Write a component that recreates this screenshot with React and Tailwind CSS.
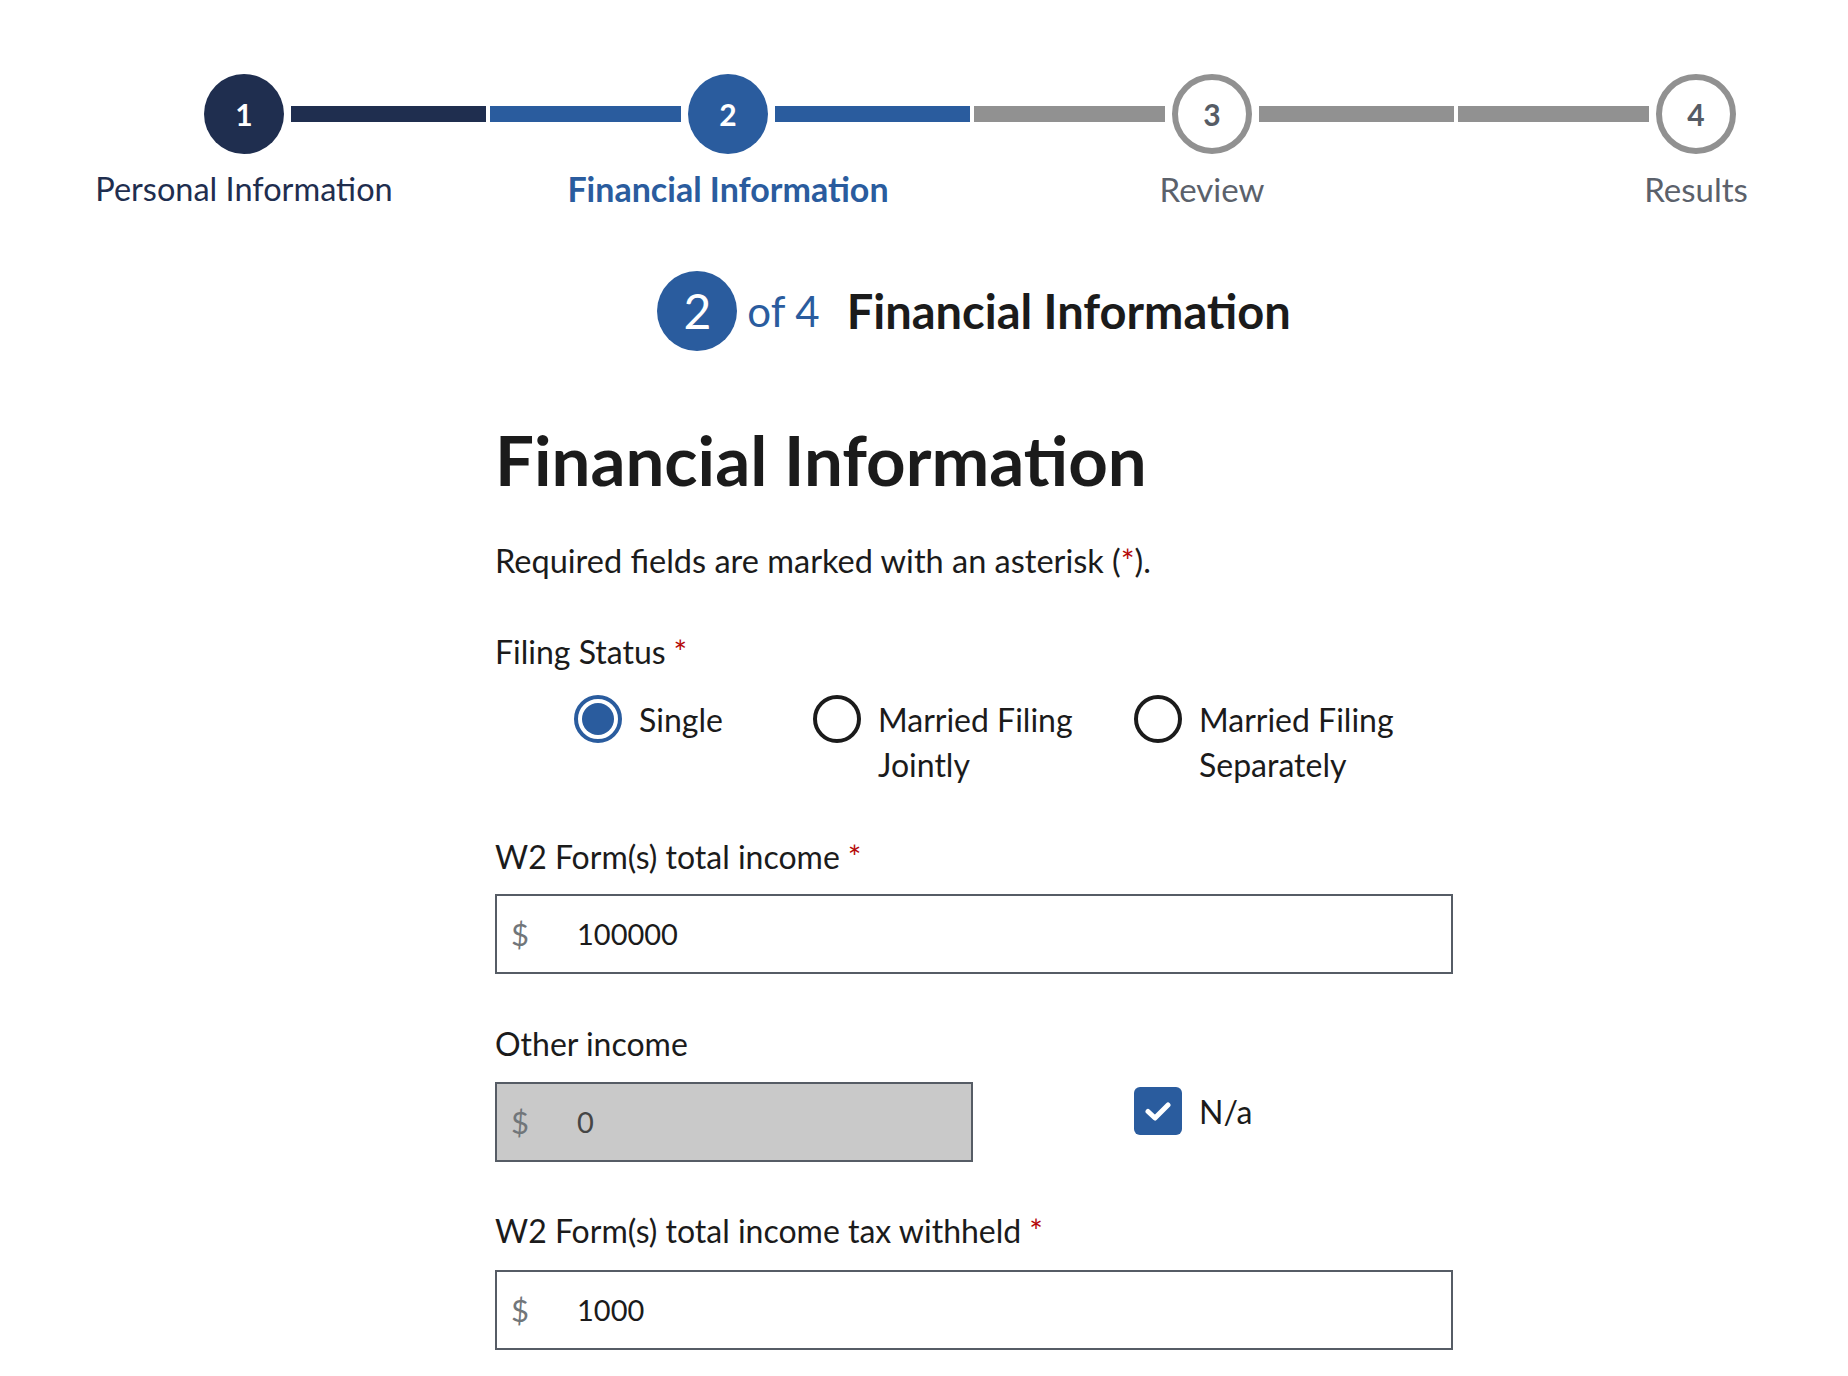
import React from "react";

const NAVY = "#1f2e4f";

function Half({ show, color, side }) {
  return (
    <div className="flex-1">
      {show ? (
        <div
          className={"h-[16px] " + (side === "left" ? "ml-[4px] mr-[7px]" : "ml-[7px] mr-0")}
          style={{ backgroundColor: color }}
        />
      ) : (
        <div className="h-[16px]" />
      )}
    </div>
  );
}

function Step({ n, label, leftColor, rightColor, variant }) {
  let circle;
  if (variant === "done") {
    circle = (
      <div className="w-[80px] h-[80px] rounded-full bg-[#1f2e4f] text-white flex items-center justify-center text-[30px] font-bold shrink-0">
        {n}
      </div>
    );
  } else if (variant === "current") {
    circle = (
      <div className="w-[80px] h-[80px] rounded-full bg-[#2a5c9e] text-white flex items-center justify-center text-[30px] font-bold shrink-0">
        {n}
      </div>
    );
  } else {
    circle = (
      <div className="w-[80px] h-[80px] rounded-full bg-white border-[6px] border-[#919191] text-[#565c65] flex items-center justify-center text-[30px] font-bold shrink-0">
        {n}
      </div>
    );
  }
  const labelCls =
    variant === "done"
      ? "text-[#1f2e4f] text-[32.5px]"
      : variant === "current"
      ? "text-[#2a5c9e] font-bold text-[34px]"
      : "text-[#5b616b] text-[33px]";
  return (
    <div className="w-[484px] shrink-0 flex flex-col items-center">
      <div className="flex items-center w-full">
        <Half side="left" show={!!leftColor} color={leftColor} />
        {circle}
        <Half side="right" show={!!rightColor} color={rightColor} />
      </div>
      <div className={"mt-[15px] leading-[40px] whitespace-nowrap " + labelCls}>{label}</div>
    </div>
  );
}

function Req() {
  return <span className="text-[#b50909] ml-[8px]">*</span>;
}

function Radio({ checked }) {
  if (checked) {
    return (
      <div className="w-[48px] h-[48px] rounded-full border-[4px] border-[#2a5c9e] p-[4px] bg-white shrink-0 mt-[-2px]">
        <div className="w-full h-full rounded-full bg-[#2a5c9e]" />
      </div>
    );
  }
  return <div className="w-[48px] h-[48px] rounded-full border-[4px] border-[#1b1b1b] bg-white shrink-0 mt-[-2px]" />;
}

function MoneyInput({ value, disabled, width }) {
  return (
    <div
      className={
        "h-[80px] border-[2px] border-[#565c65] flex items-center text-[29px] " +
        (disabled ? "bg-[#c9c9c9] " : "bg-white ") +
        width
      }
    >
      <span className="text-[#71767a] ml-[14px] w-[66px] text-[31px]">$</span>
      <span className={disabled ? "text-[#454545]" : "text-[#1b1b1b]"}>{value}</span>
    </div>
  );
}

export default function App() {
  return (
    <div className="min-h-[1376px] bg-white font-['Lato','Noto_Sans',sans-serif] text-[#1b1b1b] overflow-hidden">
      <div className="pt-[74px] pl-[2px] flex w-[1848px] overflow-hidden">
        <Step n="1" label="Personal Information" variant="done" rightColor={NAVY} />
        <Step n="2" label="Financial Information" variant="current" leftColor="#2a5c9e" rightColor="#2a5c9e" />
        <Step n="3" label="Review" variant="todo" leftColor="#919191" rightColor="#919191" />
        <Step n="4" label="Results" variant="todo" leftColor="#919191" />
      </div>

      <div className="ml-[495px] w-[958px]">
        <div className="mt-[62px] flex items-center justify-center h-[80px]">
          <div className="w-[80px] h-[80px] rounded-full bg-[#2a5c9e] text-white flex items-center justify-center text-[48px] shrink-0">
            2
          </div>
          <span className="ml-[10px] text-[42px] text-[#2a5c9e]">of 4</span>
          <span className="ml-[27px] text-[47px] font-bold text-[#1b1b1b]">Financial Information</span>
        </div>

        <h1 className="mt-[69px] text-[69px] leading-[80px] font-bold">Financial Information</h1>

        <p className="mt-[38px] text-[32.5px] leading-[45px]">
          Required fields are marked with an asterisk (<span className="text-[#b50909]">*</span>).
        </p>

        <div className="mt-[46px] text-[32px] leading-[45px]">
          Filing Status
          <Req />
        </div>

        <div className="mt-[23px] flex items-start text-[32px] leading-[45px] pl-[79px]">
          <div className="w-[239px] flex items-start shrink-0">
            <Radio checked />
            <span className="ml-[17px]">Single</span>
          </div>
          <div className="w-[321px] flex items-start shrink-0">
            <Radio />
            <span className="ml-[17px] w-[210px]">Married Filing Jointly</span>
          </div>
          <div className="flex items-start shrink-0">
            <Radio />
            <span className="ml-[17px] w-[210px]">Married Filing Separately</span>
          </div>
        </div>

        <div className="mt-[47px] text-[32px] leading-[45px]">
          W2 Form(s) total income
          <Req />
        </div>
        <div className="mt-[15px]">
          <MoneyInput value="100000" width="w-[958px]" />
        </div>

        <div className="mt-[47px] text-[32px] leading-[45px]">Other income</div>
        <div className="mt-[16px] flex items-start">
          <MoneyInput value="0" disabled width="w-[478px]" />
          <div className="ml-[161px] mt-[5px] flex items-center">
            <div className="w-[48px] h-[48px] rounded-[6px] bg-[#2a5c9e] flex items-center justify-center">
              <svg width="26" height="20" viewBox="0 0 26 20" fill="none">
                <path d="M3 10.5 L10 17 L23 4" stroke="white" strokeWidth="5" strokeLinecap="round" strokeLinejoin="round" />
              </svg>
            </div>
            <span className="ml-[17px] text-[32px] leading-[45px]">N/a</span>
          </div>
        </div>

        <div className="mt-[46px] text-[32px] leading-[45px]">
          W2 Form(s) total income tax withheld
          <Req />
        </div>
        <div className="mt-[17px]">
          <MoneyInput value="1000" width="w-[958px]" />
        </div>
      </div>
    </div>
  );
}
